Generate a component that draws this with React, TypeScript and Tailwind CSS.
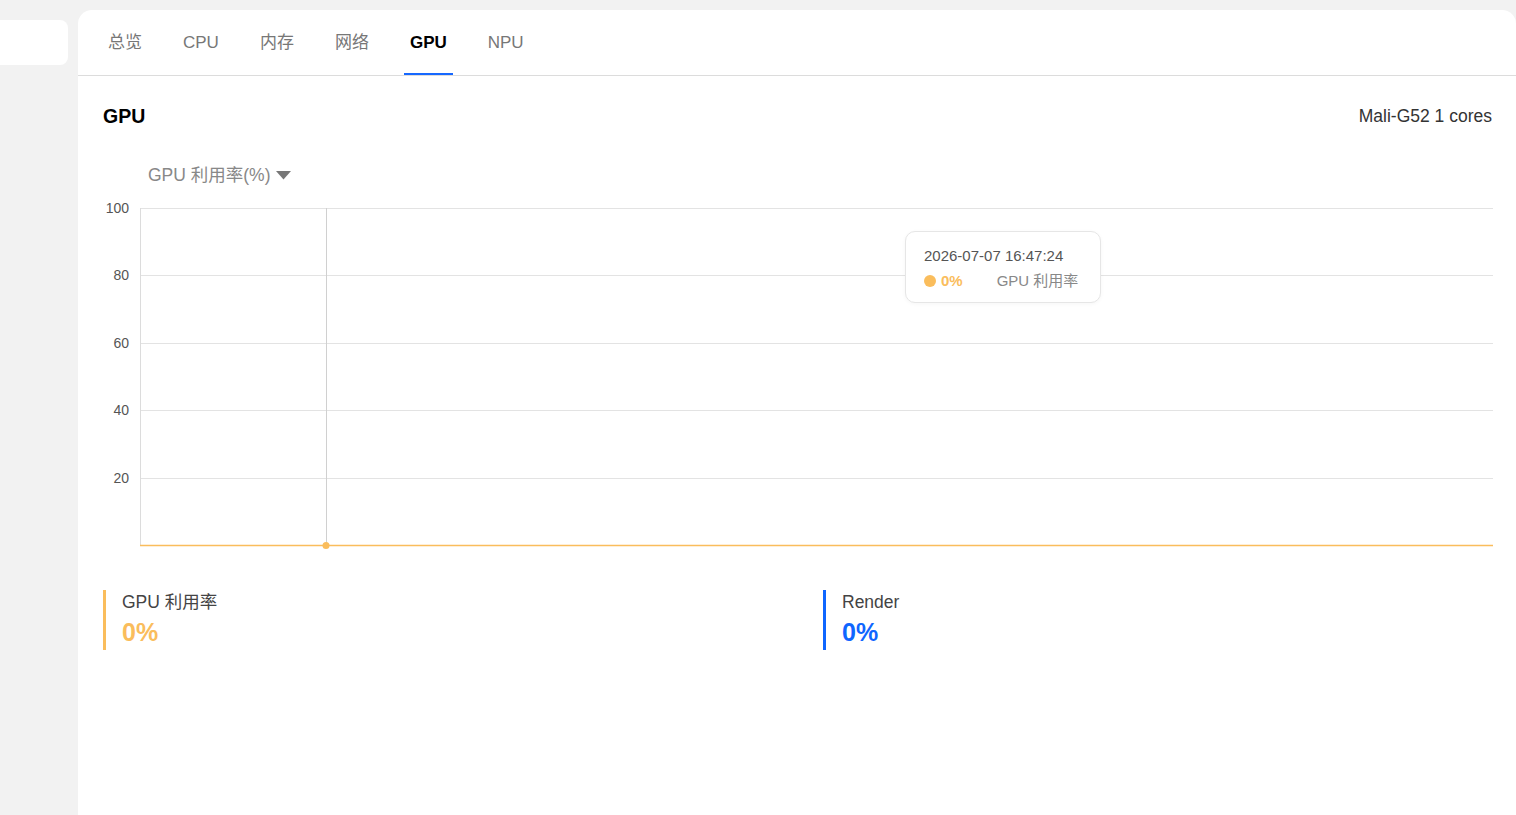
import React from 'react';

const tabs = ['总览', 'CPU', '内存', '网络', 'GPU', 'NPU'];
const ticks = [
  { label: '100', y: 13 },
  { label: '80', y: 80 },
  { label: '60', y: 148 },
  { label: '40', y: 215 },
  { label: '20', y: 283 },
];

const ORANGE = '#fabd5c';

function Chart() {
  return (
    <div className="relative h-[360px]">
      <svg width={1390} height={360} className="block">
        {ticks.map((t) => (
          <g key={t.label}>
            <line x1={37} x2={1390} y1={t.y + 0.5} y2={t.y + 0.5} stroke="#e3e3e3" />
            <text x={26} y={t.y + 1} textAnchor="end" dominantBaseline="middle" fontSize={14} fill="#555">
              {t.label}
            </text>
          </g>
        ))}
        <line x1={37.5} x2={37.5} y1={13} y2={350} stroke="#dcdcdc" />
        <line x1={223.5} x2={223.5} y1={13} y2={350} stroke="#d0d0d0" />
        <line x1={37} x2={1390} y1={350.5} y2={350.5} stroke={ORANGE} strokeWidth={1.5} />
        <circle cx={223} cy={350.5} r={3.5} fill={ORANGE} />
      </svg>
      <div className="absolute left-[802px] top-[36px] w-[196px] h-[72px] rounded-[10px] border border-[#e6e6e6] bg-white pl-[18px] pt-[15px] shadow-[0_1px_4px_rgba(0,0,0,0.04)]">
        <div className="text-[15px] leading-[18px] text-[#555]">2026-07-07 16:47:24</div>
        <div className="mt-[7px] flex items-center text-[15px] leading-[18px]">
          <span className="w-[12px] h-[12px] rounded-full" style={{ background: ORANGE }} />
          <span className="ml-[5px] font-bold text-[#fabd5c]">0%</span>
          <span className="ml-[34px] text-[#888]">GPU 利用率</span>
        </div>
      </div>
    </div>
  );
}

export default function App() {
  return (
    <div
      className="min-h-screen bg-[#f2f2f2] flex items-start overflow-hidden"
      style={{ fontFamily: '"Liberation Sans", Arial, "Noto Sans CJK SC", sans-serif' }}
    >
      {/* sidebar stub */}
      <div className="w-[68px] h-[45px] mt-[20px] bg-white rounded-r-[8px] shrink-0" />

      {/* main card */}
      <div className="ml-[10px] mt-[10px] w-[1438px] h-[830px] bg-white rounded-t-[14px] shrink-0">
        {/* tabs */}
        <div className="h-[66px] border-b border-[#dcdcdc] px-[24px] flex items-stretch gap-[29px]">
          {tabs.map((t) => {
            const active = t === 'GPU';
            return (
              <div
                key={t}
                className={
                  'relative px-[6px] flex items-center text-[17px] ' +
                  (active ? 'font-bold text-black' : 'text-[#777]')
                }
              >
                <span>{t}</span>
                {active && <span className="absolute left-0 right-0 bottom-[0px] h-[2px] bg-[#1668ff]" />}
              </div>
            );
          })}
        </div>

        <div className="px-[25px]">
          {/* title */}
          <div className="flex items-center justify-between pt-[28px] h-[52px]">
            <div className="text-[19.5px] font-bold text-black leading-[24px]">GPU</div>
            <div className="text-[17.5px] text-[#333] leading-[24px] mr-[-1px]">Mali-G52 1 cores</div>
          </div>

          {/* metric picker */}
          <div className="mt-[36px] ml-[45px] flex items-center text-[17.5px] text-[#888] leading-[22px]">
            <span>GPU 利用率(%)</span>
            <svg width="15" height="9" viewBox="0 0 15 9" className="ml-[5px]">
              <path d="M0 0 H15 L7.5 8.5 Z" fill="#777" />
            </svg>
          </div>

          <div className="mt-[9px]">
            <Chart />
          </div>

          {/* stats */}
          <div className="mt-[35px] grid grid-cols-[720px_1fr]">
            <div className="border-l-[3px] border-[#fabd5c] pl-[16px] h-[60px]">
              <div className="mt-[1px] text-[17.5px] leading-[22px] text-[#444]">GPU 利用率</div>
              <div className="mt-[4px] text-[25px] font-bold leading-[30px] text-[#fabd5c]">0%</div>
            </div>
            <div className="border-l-[3px] border-[#0f66ff] pl-[16px] h-[60px]">
              <div className="mt-[1px] text-[17.5px] leading-[22px] text-[#444]">Render</div>
              <div className="mt-[4px] text-[25px] font-bold leading-[30px] text-[#0f66ff]">0%</div>
            </div>
          </div>
        </div>
      </div>
    </div>
  );
}
